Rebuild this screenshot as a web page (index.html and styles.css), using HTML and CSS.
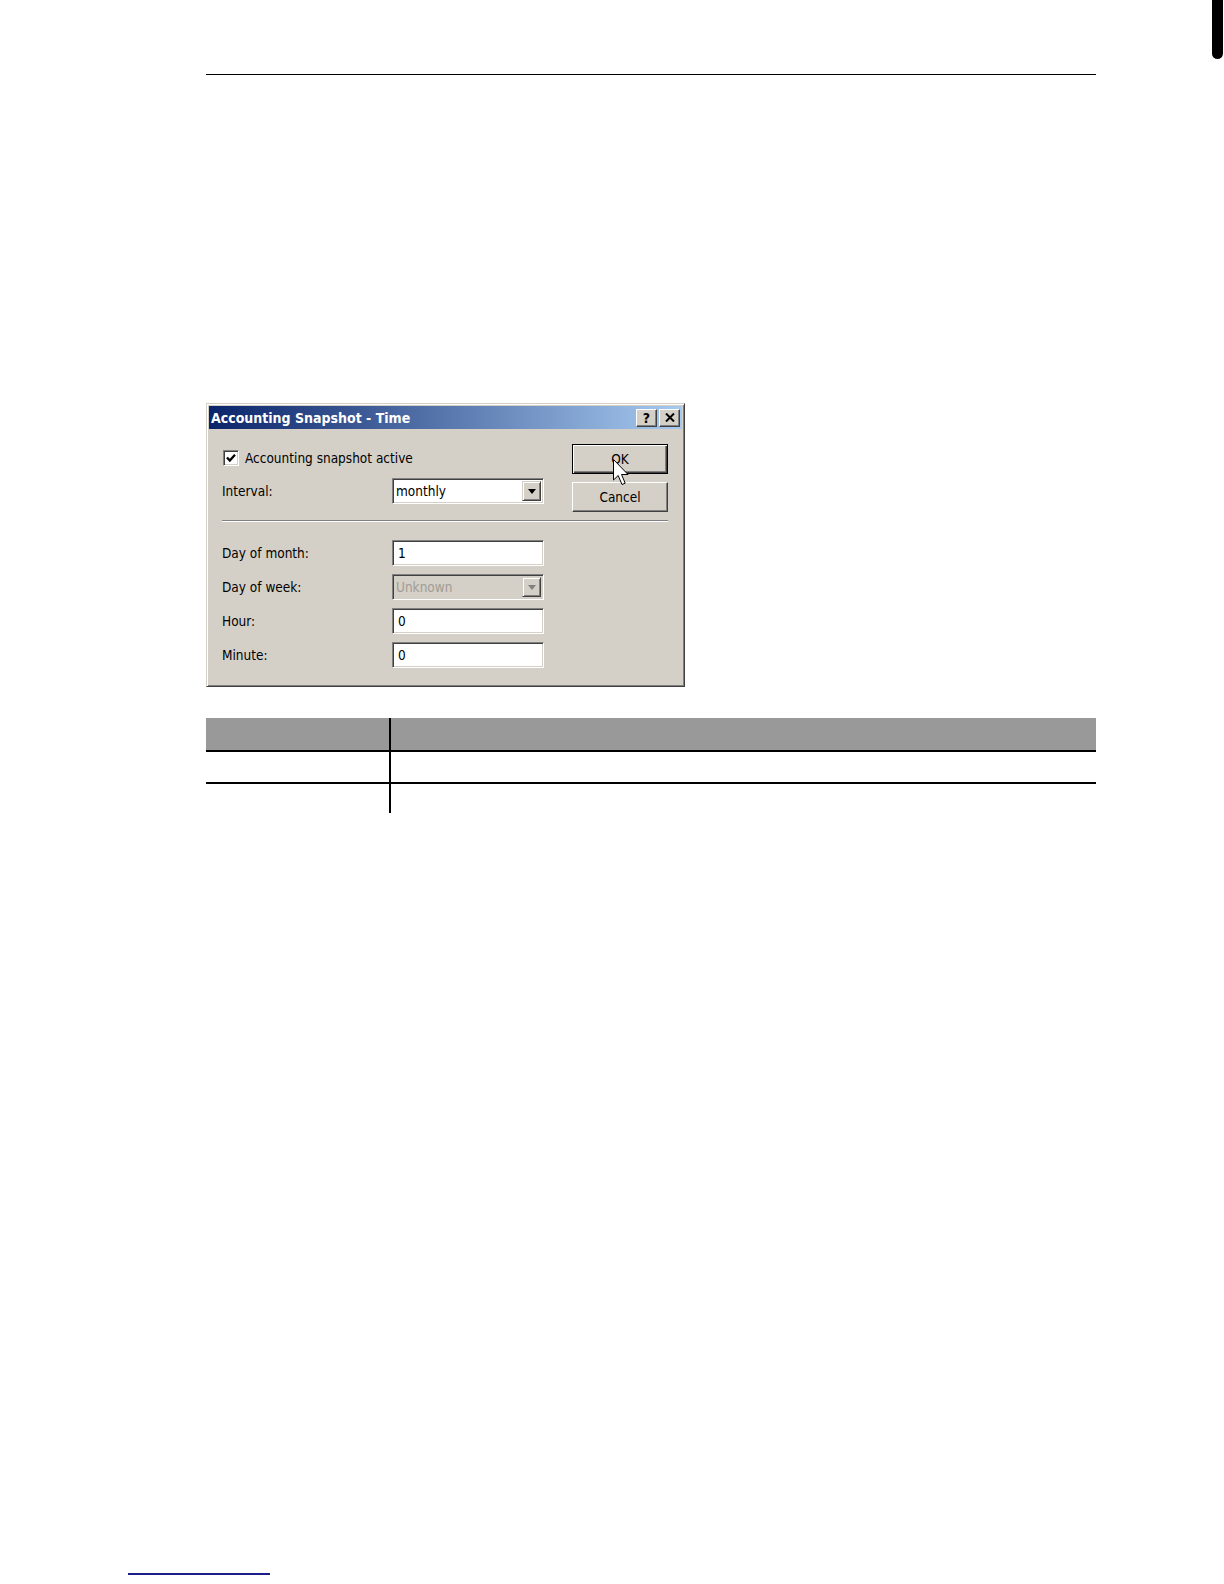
FILE: index.html
```html
<!DOCTYPE html>
<html>
<head>
<meta charset="utf-8">
<title>Accounting Snapshot - Time</title>
<link rel="stylesheet" href="styles.css">
</head>
<body>
<div class="page">
  <div class="thumb"></div>
  <div class="rule"></div>

  <div class="dialog">
    <div class="titlebar">
      <span class="title">Accounting Snapshot - Time</span>
      <div class="tbtns">
        <span class="tbtn help">?</span>
        <span class="tbtn close"><svg width="10" height="9" viewBox="0 0 10 9"><path d="M1 0.5 L9 8.5 M9 0.5 L1 8.5" stroke="#000" stroke-width="2"/></svg></span>
      </div>
    </div>
    <div class="dbody">
      <div class="top">
        <div class="topleft">
          <div class="chkrow">
            <span class="chk"><svg width="12" height="12" viewBox="0 0 12 12"><path d="M2 5.5 L4.8 8.5 L10 2.8" fill="none" stroke="#000" stroke-width="2.3"/></svg></span>
            <span class="chklbl">Accounting snapshot active</span>
          </div>
          <div class="row">
            <span class="lbl">Interval:</span>
            <div class="field combo"><span class="val">monthly</span><span class="drop"><span class="tri"></span></span></div>
          </div>
        </div>
        <div class="btns">
          <div class="btn default">OK</div>
          <div class="btn">Cancel</div>
        </div>
      </div>
      <div class="sep"></div>
      <div class="fields">
        <div class="row"><span class="lbl">Day of month:</span><div class="field"><span class="val">1</span></div></div>
        <div class="row"><span class="lbl">Day of week:</span><div class="field combo disabled"><span class="val">Unknown</span><span class="drop"><span class="tri"></span></span></div></div>
        <div class="row"><span class="lbl">Hour:</span><div class="field"><span class="val">0</span></div></div>
        <div class="row"><span class="lbl">Minute:</span><div class="field"><span class="val">0</span></div></div>
      </div>
    </div>
    <svg class="cursor" width="17" height="28" viewBox="0 0 17 28">
      <path d="M0.5 0.5 L0.5 21 L5.2 16.5 L9 25.5 L12.2 24.2 L8.5 15.5 L15 15.5 Z" fill="#fff" stroke="#000" stroke-width="1"/>
    </svg>
  </div>

  <div class="table">
    <div class="cell head c1"></div><div class="cell head c2"></div>
    <div class="cell r1 c1"></div><div class="cell r1 c2"></div>
    <div class="cell r2 c1"></div><div class="cell r2 c2"></div>
  </div>

  <div class="footline"></div>
</div>
</body>
</html>
```

FILE: styles.css
```css
html, body {
  margin: 0;
  padding: 0;
  background: #fff;
}

.page {
  position: relative;
  width: 1224px;
  height: 1584px;
  overflow: hidden;
  font-family: "DejaVu Sans Condensed", "DejaVu Sans", sans-serif;
  font-stretch: condensed;
}

.thumb {
  position: absolute;
  left: 1212px;
  top: 0;
  width: 11px;
  height: 59px;
  background: #000;
  border-radius: 0 0 6px 6px;
}

.rule {
  margin: 74px 0 0 206px;
  width: 890px;
  height: 0;
  border-top: 1px solid #000;
}

/* ---------- dialog ---------- */
.dialog {
  position: relative;
  box-sizing: border-box;
  margin: 328px 0 0 206px;
  width: 479px;
  height: 284px;
  background: #d4d0c8;
  border: 1px solid;
  border-color: #d4d0c8 #404040 #404040 #d4d0c8;
  box-shadow: inset 1px 1px #fff, inset -1px -1px #808080;
  padding: 2px;
  font-size: 13.5px;
  color: #000;
}

.titlebar {
  height: 23px;
  display: flex;
  align-items: center;
  justify-content: space-between;
  padding: 0 2px 0 2px;
  background: linear-gradient(to right, #0a246a, #a6caf0);
}

.title {
  color: #fff;
  font-weight: bold;
  font-size: 14px;
}

.tbtns {
  display: flex;
  gap: 2px;
}

.tbtn {
  box-sizing: border-box;
  width: 21px;
  height: 18px;
  display: flex;
  align-items: center;
  justify-content: center;
  background: #d4d0c8;
  border: 1px solid;
  border-color: #fff #404040 #404040 #fff;
  box-shadow: inset -1px -1px #808080;
  font-weight: bold;
  font-size: 14px;
  line-height: 1;
  color: #000;
  font-family: "DejaVu Sans", sans-serif;
}

.dbody {
  padding: 15px 14px 16px 13px;
}

.top {
  display: flex;
  gap: 28px;
}

.topleft {
  width: 322px;
  padding-top: 2px;
  display: flex;
  flex-direction: column;
  gap: 8px;
}

.chkrow {
  height: 24px;
  display: flex;
  align-items: center;
  gap: 6px;
  padding-left: 1px;
}

.chk {
  box-sizing: border-box;
  width: 16px;
  height: 16px;
  background: #fff;
  border: 1px solid;
  border-color: #808080 #fff #fff #808080;
  box-shadow: inset 1px 1px #404040, inset -1px -1px #d4d0c8;
  display: flex;
  align-items: center;
  justify-content: center;
}

.row {
  height: 26px;
  display: flex;
  align-items: center;
}

.lbl {
  width: 170px;
  flex: none;
}

.field {
  box-sizing: border-box;
  width: 152px;
  height: 26px;
  background: #fff;
  border: 1px solid;
  border-color: #808080 #fff #fff #808080;
  box-shadow: inset 1px 1px #404040, inset -1px -1px #d4d0c8;
  display: flex;
  align-items: center;
  justify-content: space-between;
  padding: 2px 2px 2px 5px;
}

.combo {
  padding-left: 3px;
}

.field.disabled {
  background: #d4d0c8;
  color: #a09c94;
}

.drop {
  box-sizing: border-box;
  width: 19px;
  height: 20px;
  background: #d4d0c8;
  border: 1px solid;
  border-color: #d4d0c8 #404040 #404040 #d4d0c8;
  box-shadow: inset 1px 1px #fff, inset -1px -1px #808080;
  display: flex;
  align-items: center;
  justify-content: center;
}

.tri {
  width: 0;
  height: 0;
  border-left: 4px solid transparent;
  border-right: 4px solid transparent;
  border-top: 5px solid #000;
  margin-top: 1px;
}

.disabled .tri {
  border-top-color: #808080;
}

.btns {
  width: 96px;
  display: flex;
  flex-direction: column;
  gap: 8px;
}

.btn {
  box-sizing: border-box;
  height: 30px;
  display: flex;
  align-items: center;
  justify-content: center;
  background: #d4d0c8;
  border: 1px solid;
  border-color: #fff #404040 #404040 #fff;
  box-shadow: inset -1px -1px #808080, inset 1px 1px #d4d0c8;
}

.btn.default {
  border: 1px solid #000;
  box-shadow: inset 1px 1px #fff, inset -1px -1px #404040, inset -2px -2px #808080;
}

.sep {
  margin-top: 8px;
  width: 446px;
  border-top: 1px solid #808080;
  border-bottom: 1px solid #fff;
}

.fields {
  margin-top: 18px;
  display: flex;
  flex-direction: column;
  gap: 8px;
}

.cursor {
  position: absolute;
  left: 406px;
  top: 55px;
}

/* ---------- table ---------- */
.table {
  margin: 31px 0 0 206px;
  width: 890px;
  display: grid;
  grid-template-columns: 183px 1fr;
}

.cell {
  height: 30px;
}

.head {
  height: 32px;
  background: #999;
}

.r2 {
  height: 29px;
}

.head, .r1 {
  border-bottom: 2px solid #000;
}

.c2 {
  border-left: 2px solid #000;
}

/* ---------- footer ---------- */
.footline {
  margin: 760px 0 0 128px;
  width: 142px;
  border-top: 2px solid #1c1c8a;
}
```
